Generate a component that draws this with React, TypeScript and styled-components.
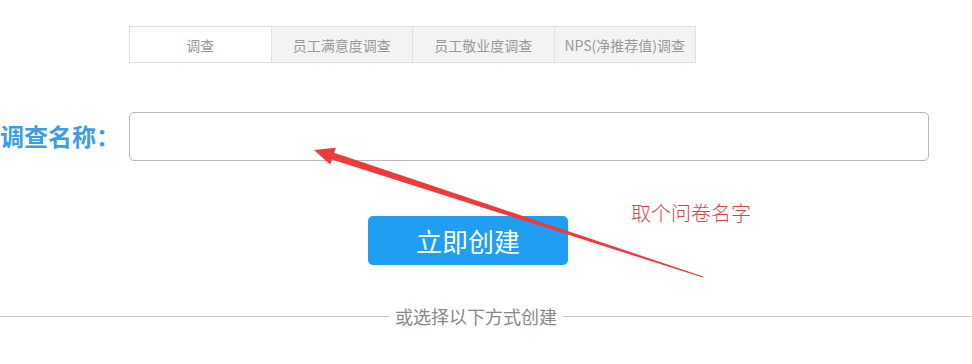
import React from "react";
import styled, { createGlobalStyle } from "styled-components";

const GlobalStyle = createGlobalStyle`
  html, body {
    margin: 0;
    padding: 0;
    background: #fff;
    font-family: "Noto Sans CJK SC", "Noto Sans", sans-serif;
  }
`;

const Page = styled.div`
  position: relative;
  width: 972px;
  height: 364px;
  overflow: hidden;
  padding-top: 26px;
  box-sizing: border-box;
`;

const Tabs = styled.div`
  display: flex;
  margin-left: 129px;
  width: 567px;
  border: 1px solid #e0e0e0;
  box-sizing: border-box;
`;

interface TabProps {
  active?: boolean;
}

const Tab = styled.div<TabProps>`
  flex: 1;
  height: 35px;
  display: flex;
  align-items: center;
  justify-content: center;
  font-size: 14px;
  color: #999;
  background: ${(p) => (p.active ? "#fff" : "#f3f3f3")};
  & + & {
    border-left: 1px solid #e0e0e0;
  }
`;

const FormRow = styled.div`
  display: flex;
  align-items: center;
  margin-top: 49px;
`;

const Label = styled.label`
  width: 129px;
  flex-shrink: 0;
  box-sizing: border-box;
  padding-right: 9px;
  display: flex;
  justify-content: flex-end;
  white-space: nowrap;
  font-size: 24px;
  font-weight: 700;
  color: #3a9ee4;
  margin-top: -3px;
`;

const NameInput = styled.input`
  width: 800px;
  height: 49px;
  box-sizing: border-box;
  border: 1px solid #b8b8b8;
  border-radius: 5px;
  outline: none;
  padding: 0 12px;
  font-size: 16px;
`;

const ButtonRow = styled.div`
  display: flex;
  margin-top: 55px;
  padding-left: 368px;
`;

const CreateButton = styled.button`
  width: 200px;
  height: 49px;
  border: none;
  border-radius: 5px;
  background: #1f9ef3;
  color: #fff;
  font-family: "Noto Sans CJK SC", sans-serif;
  font-size: 26px;
  cursor: pointer;
`;

const Divider = styled.div`
  display: flex;
  align-items: center;
  margin-top: 41px;
`;

interface LineProps {
  grow?: boolean;
}

const Line = styled.div<LineProps>`
  height: 1px;
  background: #c8c8c8;
  ${(p) => (p.grow ? "flex: 1;" : "width: 389px;")}
`;

const DividerText = styled.span`
  padding: 0 6px;
  font-size: 18px;
  color: #888;
  line-height: 20px;
`;

const Note = styled.div`
  position: absolute;
  left: 631px;
  top: 198px;
  font-size: 20px;
  color: #d8464a;
  font-family: "Noto Sans CJK SC", serif;
  font-weight: 300;
`;

const ArrowLayer = styled.svg`
  position: absolute;
  left: 0;
  top: 0;
  pointer-events: none;
`;

const tabs = ["调查", "员工满意度调查", "员工敬业度调查", "NPS(净推荐值)调查"];

export default function App() {
  return (
    <Page>
      <GlobalStyle />
      <Tabs>
        {tabs.map((t, i) => (
          <Tab key={t} active={i === 0}>
            {t}
          </Tab>
        ))}
      </Tabs>
      <FormRow>
        <Label>
          <span>调查名称：</span>
        </Label>
        <NameInput />
      </FormRow>
      <ButtonRow>
        <CreateButton>立即创建</CreateButton>
      </ButtonRow>
      <Divider>
        <Line />
        <DividerText>或选择以下方式创建</DividerText>
        <Line grow />
      </Divider>
      <Note>取个问卷名字</Note>
      <ArrowLayer width="972" height="364" viewBox="0 0 972 364">
        <polygon
          points="314,150 335.8,147.8 334.1,152.8 703.2,276.4 702.8,277.6 331.9,159.5 330.2,164.6"
          fill="#ee3a3a"
        />
      </ArrowLayer>
    </Page>
  );
}
